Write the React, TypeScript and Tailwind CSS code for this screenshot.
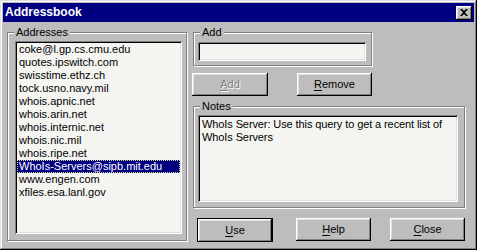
import React from "react";

const raised =
  "shadow-[inset_-1px_-1px_0_#000,inset_1px_1px_0_#fff,inset_-2px_-2px_0_#808080,inset_2px_2px_0_#dfdfdf]";
const sunken =
  "shadow-[inset_1px_1px_0_#808080,inset_-1px_-1px_0_#fff,inset_2px_2px_0_#000,inset_-2px_-2px_0_#dfdfdf]";

const addresses = [
  "coke@l.gp.cs.cmu.edu",
  "quotes.ipswitch.com",
  "swisstime.ethz.ch",
  "tock.usno.navy.mil",
  "whois.apnic.net",
  "whois.arin.net",
  "whois.internic.net",
  "whois.nic.mil",
  "whois.ripe.net",
  "WhoIs-Servers@sipb.mit.edu",
  "www.engen.com",
  "xfiles.esa.lanl.gov",
];

function GroupBox({
  label,
  className,
  children,
}: {
  label: string;
  className: string;
  children: React.ReactNode;
}) {
  return (
    <div
      className={`relative border border-[#808080] shadow-[1px_1px_0_#fff,inset_1px_1px_0_#fff] ${className}`}
    >
      <span className="absolute -top-[7px] left-[6px] bg-[#bdbdbd] px-[2px] leading-[13px]">
        {label}
      </span>
      {children}
    </div>
  );
}

function Button({
  hotkey,
  rest,
  className = "",
  disabled = false,
}: {
  hotkey: string;
  rest: string;
  className?: string;
  disabled?: boolean;
}) {
  return (
    <div
      className={`flex h-[23px] items-center justify-center bg-[#bdbdbd] ${raised} ${className} ${
        disabled ? "text-[#808080] [text-shadow:1px_1px_0_#fff]" : "text-black"
      }`}
    >
      <span>
        <span className="underline underline-offset-[2px]">{hotkey}</span>
        {rest}
      </span>
    </div>
  );
}

export default function App() {
  return (
    <div
      className="flex h-[250px] w-[477px] flex-col bg-[#bdbdbd] p-[3px] text-[11px] leading-[13px] text-black shadow-[inset_-1px_-1px_0_#000,inset_1px_1px_0_#dfdfdf,inset_-2px_-2px_0_#808080,inset_2px_2px_0_#fff]"
      style={{ fontFamily: '"Liberation Sans", Arial, sans-serif' }}
    >
      {/* title bar */}
      <div className="flex h-[19px] items-center justify-between bg-[#000080] pl-[2px] pr-[2px]">
        <span className="text-[12px] font-bold text-white">Addressbook</span>
        <div className={`flex h-[14px] w-[16px] items-center justify-center bg-[#bdbdbd] ${raised}`}>
          <svg width="8" height="7" viewBox="0 0 8 7" className="-mt-[1px]">
            <path d="M0 0h2l2 2 2-2h2L5 3.5 8 7H6L4 5 2 7H0l3-3.5z" fill="#000" />
          </svg>
        </div>
      </div>

      <div className="mt-[10px] flex">
        {/* addresses */}
        <GroupBox label="Addresses" className="ml-[4px] h-[209px] w-[180px] pl-[7px] pt-[8px]">
          <div className={`h-[193px] w-[167px] bg-[#f4f5f1] p-[2px] ${sunken}`}>
            {addresses.map((a) => {
              const sel = a.startsWith("WhoIs");
              return (
                <div
                  key={a}
                  className={`h-[13px] whitespace-nowrap pl-[2px] ${
                    sel
                      ? "bg-[#000080] text-white outline-1 -outline-offset-1 outline-dotted outline-[#d8d890]"
                      : ""
                  }`}
                >
                  {a}
                </div>
              );
            })}
          </div>
        </GroupBox>

        {/* right side */}
        <div className="ml-[6px] flex w-[272px] flex-col">
          <GroupBox label="Add" className="h-[34px] w-[179px] pl-[4px] pt-[9px]">
            <div className={`h-[19px] w-[168px] bg-[#f4f5f1] ${sunken}`} />
          </GroupBox>

          <div className="-ml-[1px] mt-[7px] flex w-[180px] justify-between">
            <Button hotkey="A" rest="dd" disabled className="w-[76px]" />
            <Button hotkey="R" rest="emove" className="w-[75px]" />
          </div>

          <GroupBox label="Notes" className="mt-[10px] h-[102px] w-[272px] pl-[4px] pt-[8px]">
            <div className={`h-[87px] w-[260px] bg-[#f4f5f1] px-[4px] pt-[3px] tracking-[-0.1px] ${sunken}`}>
              WhoIs Server: Use this query to get a recent list of WhoIs Servers
            </div>
          </GroupBox>

          <div className="mt-[10px] flex">
            <div className="ml-[4px] h-[24px] w-[76px] border border-black">
              <Button hotkey="U" rest="se" className="h-[22px] w-[74px]" />
            </div>
            <Button hotkey="H" rest="elp" className="ml-[23px] w-[75px]" />
            <Button hotkey="C" rest="lose" className="ml-[19px] w-[75px]" />
          </div>
        </div>
      </div>
    </div>
  );
}
